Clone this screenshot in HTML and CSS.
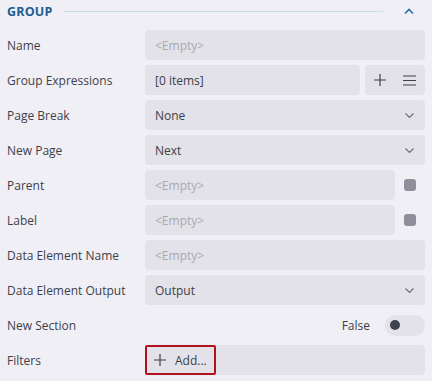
FILE: index.html
```html
<!DOCTYPE html>
<html lang="en">
<head>
    <meta charset="UTF-8">
    <title>Group</title>
    <link rel="stylesheet" href="styles.css">
</head>
<body>
    <div class="panel">
        <div class="section-header">
            <span class="section-title">GROUP</span>
            <span class="section-line"></span>
            <svg class="collapse" width="10" height="6" viewBox="0 0 10 6"><path d="M1 5.5 L5 1.5 L9 5.5" fill="none" stroke="#2a6fa8" stroke-width="1.6"/></svg>
        </div>

        <div class="row">
            <label>Name</label>
            <div class="field placeholder">&lt;Empty&gt;</div>
        </div>
        <div class="row">
            <label>Group Expressions</label>
            <div class="split">
                <div class="field">[0 items]</div>
                <div class="tools">
                    <svg width="12" height="12" viewBox="0 0 12 12"><path d="M6 0 V12 M0 6 H12" stroke="#3c3f4a" stroke-width="1.2"/></svg>
                    <svg width="13" height="11" viewBox="0 0 13 11"><path d="M0 1 H13 M0 5.5 H13 M0 10 H13" stroke="#3c3f4a" stroke-width="1.2"/></svg>
                </div>
            </div>
        </div>
        <div class="row">
            <label>Page Break</label>
            <div class="field select">None<svg class="caret" width="9" height="5" viewBox="0 0 9 5"><path d="M0.5 0.5 L4.5 4.5 L8.5 0.5" fill="none" stroke="#6a6d78" stroke-width="1.1"/></svg></div>
        </div>
        <div class="row">
            <label>New Page</label>
            <div class="field select">Next<svg class="caret" width="9" height="5" viewBox="0 0 9 5"><path d="M0.5 0.5 L4.5 4.5 L8.5 0.5" fill="none" stroke="#6a6d78" stroke-width="1.1"/></svg></div>
        </div>
        <div class="row">
            <label>Parent</label>
            <div class="split">
                <div class="field placeholder">&lt;Empty&gt;</div>
                <div class="check-cell"><span class="check"></span></div>
            </div>
        </div>
        <div class="row">
            <label>Label</label>
            <div class="split">
                <div class="field placeholder">&lt;Empty&gt;</div>
                <div class="check-cell"><span class="check"></span></div>
            </div>
        </div>
        <div class="row">
            <label>Data Element Name</label>
            <div class="field placeholder">&lt;Empty&gt;</div>
        </div>
        <div class="row">
            <label>Data Element Output</label>
            <div class="field select">Output<svg class="caret" width="9" height="5" viewBox="0 0 9 5"><path d="M0.5 0.5 L4.5 4.5 L8.5 0.5" fill="none" stroke="#6a6d78" stroke-width="1.1"/></svg></div>
        </div>
        <div class="row">
            <label>New Section</label>
            <div class="toggle-cell">
                <span class="toggle-text">False</span>
                <span class="toggle"><span class="knob"></span></span>
            </div>
        </div>
        <div class="row">
            <label>Filters</label>
            <div class="field list">
                <button type="button" class="add">
                    <svg width="12" height="12" viewBox="0 0 12 12"><path d="M6 0 V12 M0 6 H12" stroke="#3c3f4a" stroke-width="1.2"/></svg>
                    Add...
                </button>
            </div>
        </div>
    </div>
</body>
</html>
```

FILE: styles.css
```css
body {
    margin: 0;
    background-color: #f0eff5;
    font-family: "Open Sans", sans-serif;
    font-size: 12px;
    color: #3c3f4a;
}
.panel {
    display: flex;
    flex-direction: column;
    gap: 5px;
    padding: 0 7px 0 7px;
}
.section-header {
    display: flex;
    align-items: center;
    height: 22px;
    margin-bottom: 3px;
}
.section-title {
    font-weight: bold;
    font-size: 12.5px;
    color: #1d5d91;
    letter-spacing: 0.2px;
}
.section-line {
    flex: 1;
    height: 1px;
    background-color: #c9dde6;
    margin: 0 21px 0 11px;
}
.collapse {
    margin-right: 11px;
}
.row {
    display: grid;
    grid-template-columns: 138px 1fr;
    height: 30px;
    align-items: center;
}
.row label {
    white-space: nowrap;
}
.field {
    height: 30px;
    box-sizing: border-box;
    padding: 0 10px;
    display: flex;
    align-items: center;
    background-color: #e3e2e8;
    border-radius: 4px;
}
.placeholder {
    color: #a9a9b2;
}
.select {
    justify-content: space-between;
}
.caret {
    margin-right: 1px;
}
.split {
    display: flex;
    gap: 5px;
    height: 30px;
}
.split .field {
    flex: 1;
}
.tools {
    width: 60px;
    display: flex;
    align-items: center;
    justify-content: space-between;
    padding: 0 9px 0 9px;
    box-sizing: border-box;
    background-color: #e3e2e8;
    border-radius: 4px;
}
.check-cell {
    width: 25px;
    display: flex;
    align-items: center;
    justify-content: flex-end;
    padding-right: 9px;
    box-sizing: border-box;
}
.check {
    width: 12px;
    height: 12px;
    border-radius: 3px;
    background-color: #8e8f9b;
}
.toggle-cell {
    display: flex;
    align-items: center;
    justify-content: flex-end;
    gap: 15px;
}
.toggle {
    width: 40px;
    height: 21px;
    border-radius: 11px;
    background-color: #e3e2e8;
    display: flex;
    align-items: center;
    padding-left: 5px;
    box-sizing: border-box;
}
.knob {
    width: 10px;
    height: 10px;
    border-radius: 50%;
    background-color: #3d4250;
}
.list {
    padding: 0;
}
.add {
    height: 30px;
    width: 71px;
    box-sizing: border-box;
    border: 2px solid #b3121c;
    border-radius: 2px;
    background: transparent;
    display: flex;
    align-items: center;
    gap: 9px;
    padding: 0 0 0 7px;
    font-family: "Open Sans", sans-serif;
    font-size: 12px;
    color: #3c3f4a;
    cursor: pointer;
}
```
